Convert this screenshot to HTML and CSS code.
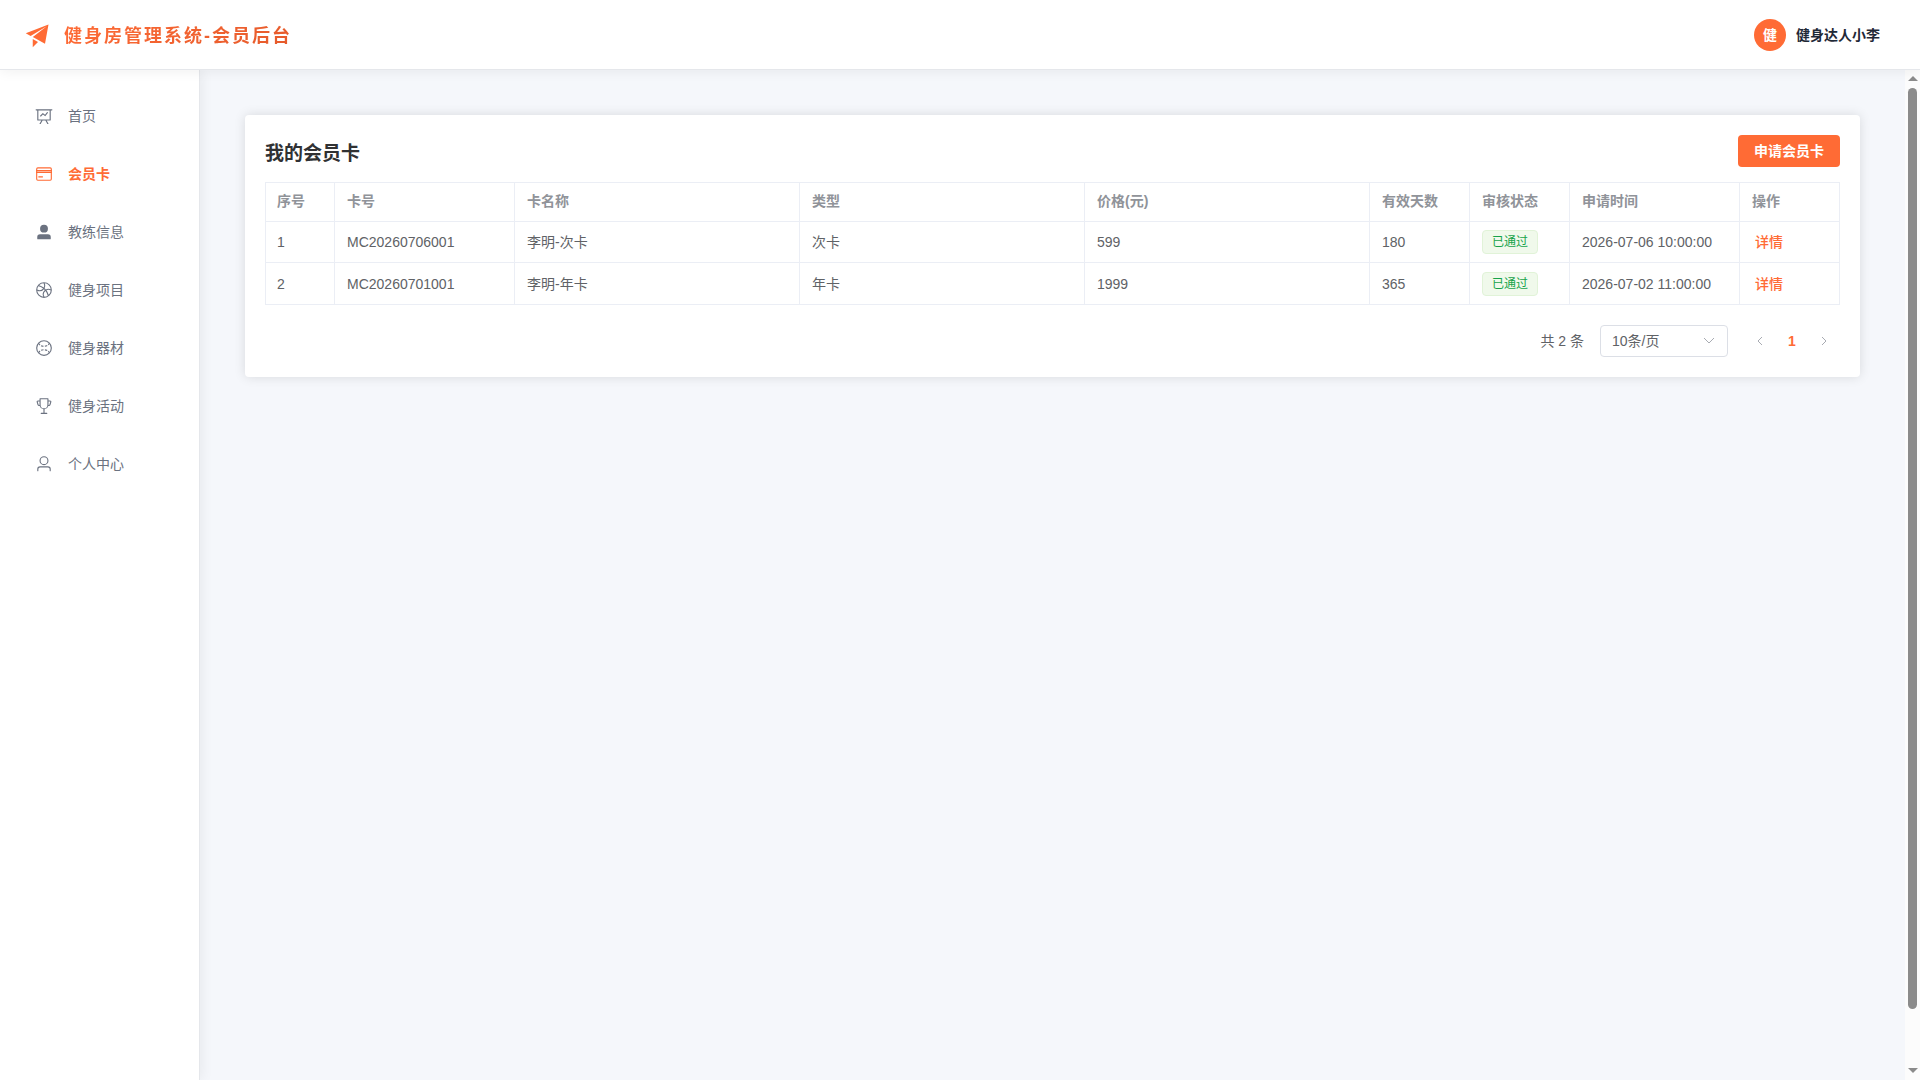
FILE: index.html
```html
<!DOCTYPE html>
<html lang="zh-CN">
<head>
<meta charset="utf-8">
<title>健身房管理系统-会员后台</title>
<link rel="stylesheet" href="styles.css">
</head>
<body>
<div class="app">
  <header class="topbar">
    <div class="brand">
      <svg class="brand-icon" viewBox="0 0 1024 1024" aria-hidden="true"><path d="m64 448 832-320-128 704-446.08-243.328L832 192 242.816 545.472zm256 512V657.024L512 768z"/></svg>
      <h1 class="brand-title">健身房管理系统-会员后台</h1>
    </div>
    <div class="account">
      <span class="avatar">健</span>
      <span class="account-name">健身达人小李</span>
    </div>
  </header>
  <div class="body">
    <nav class="sidebar">
      <a class="menu-item" href="#home">
        <svg class="menu-icon" viewBox="0 0 1024 1024" aria-hidden="true"><path d="M359.168 768H160a32 32 0 0 1-32-32V192H64a32 32 0 0 1 0-64h896a32 32 0 1 1 0 64h-64v544a32 32 0 0 1-32 32H665.216l110.848 192h-73.856L591.36 768H433.024L322.176 960H248.32zM832 192H192v512h640zM342.656 534.656a32 32 0 1 1-45.312-45.312L444.992 341.76l125.44 94.08L679.04 300.032a32 32 0 1 1 49.92 39.936L581.632 524.224 451.008 426.24z"/></svg>
        <span class="menu-label">首页</span>
      </a>
      <a class="menu-item active" href="#cards" aria-current="page">
        <svg class="menu-icon" viewBox="0 0 1024 1024" aria-hidden="true"><path d="M160 128h704a96 96 0 0 1 96 96v576a96 96 0 0 1-96 96H160a96 96 0 0 1-96-96V224a96 96 0 0 1 96-96m0 64a32 32 0 0 0-32 32v576a32 32 0 0 0 32 32h704a32 32 0 0 0 32-32V224a32 32 0 0 0-32-32z" fill-rule="evenodd"/><path d="M64 288h896v64H64zm0 96h896v64H64zm128 256h256v64H192z"/></svg>
        <span class="menu-label">会员卡</span>
      </a>
      <a class="menu-item" href="#coaches">
        <svg class="menu-icon" viewBox="0 0 1024 1024" aria-hidden="true"><path d="M288 320a224 224 0 1 0 448 0 224 224 0 1 0-448 0m544 608H160a32 32 0 0 1-32-32v-96a160 160 0 0 1 160-160h448a160 160 0 0 1 160 160v96a32 32 0 0 1-32 32z"/></svg>
        <span class="menu-label">教练信息</span>
      </a>
      <a class="menu-item" href="#projects">
        <svg class="menu-icon" viewBox="0 0 1024 1024" aria-hidden="true"><path d="M778.752 788.224a382.464 382.464 0 0 0 116.032-245.632 256.512 256.512 0 0 0-241.728-13.952 762.88 762.88 0 0 1 125.696 259.584m-55.04 44.224a699.648 699.648 0 0 0-125.056-269.632 256.128 256.128 0 0 0-56.064 331.968 382.72 382.72 0 0 0 181.12-62.336m-254.08 61.248A320.128 320.128 0 0 1 557.76 513.6a715.84 715.84 0 0 0-48.192-48.128 320.128 320.128 0 0 1-379.264 88.384 382.4 382.4 0 0 0 110.144 229.696 382.4 382.4 0 0 0 229.184 110.08zM129.28 481.088a256.128 256.128 0 0 0 331.072-56.448 699.648 699.648 0 0 0-268.8-124.352 382.656 382.656 0 0 0-62.272 180.8m106.56-235.84a762.88 762.88 0 0 1 258.688 125.056 256.512 256.512 0 0 0-13.44-241.088A382.464 382.464 0 0 0 235.84 245.248m318.08-114.944c40.576 89.536 37.76 193.92-8.448 281.344a779.84 779.84 0 0 1 66.176 66.112 320.832 320.832 0 0 1 282.112-8.128 382.4 382.4 0 0 0-110.144-229.12 382.4 382.4 0 0 0-229.632-110.208zM828.8 828.8a448 448 0 1 1-633.6-633.6 448 448 0 0 1 633.6 633.6"/></svg>
        <span class="menu-label">健身项目</span>
      </a>
      <a class="menu-item" href="#equipment">
        <svg class="menu-icon" viewBox="0 0 1024 1024" aria-hidden="true"><g fill="none" stroke="currentColor" stroke-width="64"><circle cx="512" cy="512" r="416"/><path d="M206 230c30 110 150 180 306 180s276-70 306-180M206 794c30-110 150-180 306-180s276 70 306 180" stroke-dasharray="140 70"/></g></svg>
        <span class="menu-label">健身器材</span>
      </a>
      <a class="menu-item" href="#activities">
        <svg class="menu-icon" viewBox="0 0 1024 1024" aria-hidden="true"><path d="M480 896V702.08A256.256 256.256 0 0 1 264.064 512h-32.64a96 96 0 0 1-91.968-68.416L93.632 290.88a76.8 76.8 0 0 1 73.6-98.88H256V96a32 32 0 0 1 32-32h448a32 32 0 0 1 32 32v96h88.768a76.8 76.8 0 0 1 73.6 98.88L884.48 443.52A96 96 0 0 1 792.576 512h-32.64A256.256 256.256 0 0 1 544 702.08V896h128a32 32 0 1 1 0 64H352a32 32 0 1 1 0-64zm224-448V128H320v320a192 192 0 1 0 384 0m64 0h24.576a32 32 0 0 0 30.656-22.784l45.824-152.768A12.8 12.8 0 0 0 856.768 256H768zm-512 0V256h-88.768a12.8 12.8 0 0 0-12.288 16.448l45.824 152.768A32 32 0 0 0 231.424 448z"/></svg>
        <span class="menu-label">健身活动</span>
      </a>
      <a class="menu-item" href="#profile">
        <svg class="menu-icon" viewBox="0 0 1024 1024" aria-hidden="true"><path d="M512 512a192 192 0 1 0 0-384 192 192 0 0 0 0 384m0 64a256 256 0 1 1 0-512 256 256 0 0 1 0 512m320 320v-96a96 96 0 0 0-96-96H288a96 96 0 0 0-96 96v96a32 32 0 1 1-64 0v-96a160 160 0 0 1 160-160h448a160 160 0 0 1 160 160v96a32 32 0 1 1-64 0"/></svg>
        <span class="menu-label">个人中心</span>
      </a>
    </nav>
    <main class="main">
      <section class="card">
        <div class="card-head">
          <h2 class="card-title">我的会员卡</h2>
          <button class="primary-button" type="button">申请会员卡</button>
        </div>
        <table class="table">
          <colgroup>
            <col class="w-index"><col class="w-number"><col><col><col><col class="w-short"><col class="w-short"><col class="w-time"><col class="w-short">
          </colgroup>
          <thead>
            <tr><th>序号</th><th>卡号</th><th>卡名称</th><th>类型</th><th>价格(元)</th><th>有效天数</th><th>审核状态</th><th>申请时间</th><th>操作</th></tr>
          </thead>
          <tbody>
            <tr><td>1</td><td>MC20260706001</td><td>李明-次卡</td><td>次卡</td><td>599</td><td>180</td><td><span class="tag">已通过</span></td><td>2026-07-06 10:00:00</td><td><button class="link-button" type="button">详情</button></td></tr>
            <tr><td>2</td><td>MC20260701001</td><td>李明-年卡</td><td>年卡</td><td>1999</td><td>365</td><td><span class="tag">已通过</span></td><td>2026-07-02 11:00:00</td><td><button class="link-button" type="button">详情</button></td></tr>
          </tbody>
        </table>
        <div class="pagination">
          <span class="total">共 2 条</span>
          <span class="select-wrap">
            <select class="page-size" aria-label="每页条数"><option>10条/页</option><option>20条/页</option><option>50条/页</option></select>
            <svg class="select-arrow" viewBox="0 0 14 14" aria-hidden="true"><path d="m2 4 5 5 5-5"/></svg>
          </span>
          <div class="pager">
            <button class="page-button" type="button" aria-label="上一页" disabled><svg class="page-arrow" viewBox="0 0 12 12" aria-hidden="true"><path d="M8 2 4 6l4 4"/></svg></button>
            <button class="page-button current" type="button" aria-current="page">1</button>
            <button class="page-button" type="button" aria-label="下一页" disabled><svg class="page-arrow" viewBox="0 0 12 12" aria-hidden="true"><path d="m4 2 4 4-4 4"/></svg></button>
          </div>
        </div>
      </section>
    </main>
    <div class="scrollbar" aria-hidden="true">
      <span class="scroll-up"></span>
      <div class="scroll-track"><div class="scroll-thumb"></div></div>
      <span class="scroll-down"></span>
    </div>
  </div>
</div>
</body>
</html>
```
FILE: styles.css
```css
* {
  box-sizing: border-box;
}

body {
  margin: 0;
  font-family: "Liberation Sans", "Noto Sans CJK SC", sans-serif;
  font-size: 14px;
  color: #606266;
}

button,
select {
  font: inherit;
}

svg {
  display: block;
}

.app {
  display: flex;
  flex-direction: column;
  height: 100vh;
}

.topbar {
  display: flex;
  align-items: center;
  justify-content: space-between;
  flex: none;
  height: 70px;
  padding: 0 40px 0 24px;
  background: #fff;
  border-bottom: 1px solid #e5e7eb;
  box-shadow: 0 2px 12px rgba(0, 0, 0, 0.06);
  z-index: 1;
}

.brand {
  display: flex;
  align-items: center;
  gap: 12px;
}

.brand-icon {
  width: 28px;
  height: 28px;
  fill: #ff6b35;
}

.brand-title {
  margin: 0;
  padding-top: 2px;
  font-size: 18px;
  font-weight: 700;
  line-height: 28px;
  letter-spacing: 2px;
  color: transparent;
  background: linear-gradient(135deg, #ff6b35, #e55a2b);
  background-clip: text;
}

.account {
  display: flex;
  align-items: center;
  gap: 10px;
}

.avatar {
  width: 32px;
  height: 32px;
  border-radius: 50%;
  background: #ff6b35;
  color: #fff;
  font-weight: 700;
  line-height: 32px;
  text-align: center;
}

.account-name {
  padding-bottom: 2px;
  font-weight: 600;
  color: #1f2937;
}

.body {
  display: flex;
  flex: 1;
  min-height: 0;
}

.sidebar {
  display: flex;
  flex-direction: column;
  flex: none;
  gap: 8px;
  width: 200px;
  padding: 21px 0;
  background: #fff;
  border-right: 1px solid #e5e7eb;
  box-shadow: 2px 0 12px rgba(0, 0, 0, 0.06);
}

.menu-item {
  display: flex;
  align-items: center;
  gap: 15px;
  height: 50px;
  padding-left: 35px;
  color: #6b7280;
  text-decoration: none;
}

.menu-item.active {
  color: #ff6b35;
  font-weight: 600;
}

.menu-icon {
  width: 18px;
  height: 18px;
  fill: currentColor;
}

.menu-label {
  padding-bottom: 2px;
}

.main {
  flex: 1;
  min-width: 0;
  padding: 45px;
  background: #f5f7fb;
  overflow: hidden;
}

.sidebar,
.scrollbar {
  z-index: 0;
}

.card {
  padding: 20px;
  background: #fff;
  border-radius: 4px;
  box-shadow: 0 0 12px rgba(0, 0, 0, 0.12);
}

.card-head {
  display: flex;
  align-items: flex-start;
  justify-content: space-between;
  margin-bottom: 10px;
}

.card-title {
  margin: 0;
  font-size: 19px;
  line-height: 37px;
  color: #303133;
}

.primary-button {
  height: 32px;
  padding: 0 16px 2px;
  border: 0;
  border-radius: 4px;
  background: #ff6b35;
  color: #fff;
  font-weight: 600;
}

.table {
  width: 100%;
  table-layout: fixed;
  border-collapse: separate;
  border-spacing: 0;
}

.w-index {
  width: 70px;
}

.w-number {
  width: 180px;
}

.w-short {
  width: 100px;
}

.w-time {
  width: 170px;
}

.table th,
.table td {
  height: 41px;
  padding: 0 11px 0 12px;
  border-right: 1px solid #ebeef5;
  border-bottom: 1px solid #ebeef5;
  line-height: 24px;
  text-align: left;
  white-space: nowrap;
}

.table tr:last-child td {
  height: 42px;
}

.table tr:last-child th {
  height: 40px;
  padding-bottom: 2px;
  border-top: 1px solid #ebeef5;
  color: #909399;
  font-weight: 600;
}

.table th:first-child,
.table td:first-child {
  padding-left: 11px;
  border-left: 1px solid #ebeef5;
}

.tag {
  display: block;
  width: fit-content;
  padding: 0 9px;
  border: 1px solid #e1f3d8;
  border-radius: 4px;
  background: #f0f9eb;
  color: #16a34a;
  font-size: 12px;
  line-height: 22px;
}

.link-button {
  display: block;
  padding: 0 3px;
  border: 0;
  background: none;
  color: #ff6b35;
  font-weight: 500;
  line-height: 24px;
}

.pagination {
  display: flex;
  align-items: center;
  justify-content: flex-end;
  gap: 16px;
  margin-top: 20px;
}

.total {
  padding-bottom: 2px;
}

.select-wrap {
  display: grid;
  align-items: center;
  width: 128px;
}

.page-size {
  grid-area: 1 / 1;
  width: 100%;
  height: 32px;
  padding: 0 11px;
  border: 1px solid #dcdfe6;
  border-radius: 4px;
  background: #fff;
  color: #606266;
  appearance: none;
}

.select-arrow {
  grid-area: 1 / 1;
  justify-self: end;
  width: 14px;
  height: 14px;
  margin-right: 12px;
  pointer-events: none;
}

.select-arrow,
.page-arrow {
  fill: none;
  stroke: #a8abb2;
}

.pager {
  display: flex;
}

.page-button {
  display: grid;
  place-items: center;
  width: 32px;
  height: 32px;
  padding: 0;
  border: 0;
  background: none;
}

.page-button.current {
  color: #ff6b35;
  font-weight: 700;
}

.page-arrow {
  width: 12px;
  height: 12px;
}

.scrollbar {
  display: flex;
  flex-direction: column;
  align-items: center;
  flex: none;
  width: 15px;
  padding: 6px 0 7px;
  background: #fcfcfc;
}

.scroll-up,
.scroll-down {
  border: 5px solid transparent;
}

.scroll-up {
  border-top: 0;
  border-bottom-color: #8b8b8b;
}

.scroll-down {
  border-bottom: 0;
  border-top-color: #8b8b8b;
}

.scroll-track {
  flex: 1;
  width: 9px;
  margin: 7px 0;
}

.scroll-thumb {
  height: calc(100% - 52px);
  border-radius: 5px;
  background: #8b8b8b;
}
```
